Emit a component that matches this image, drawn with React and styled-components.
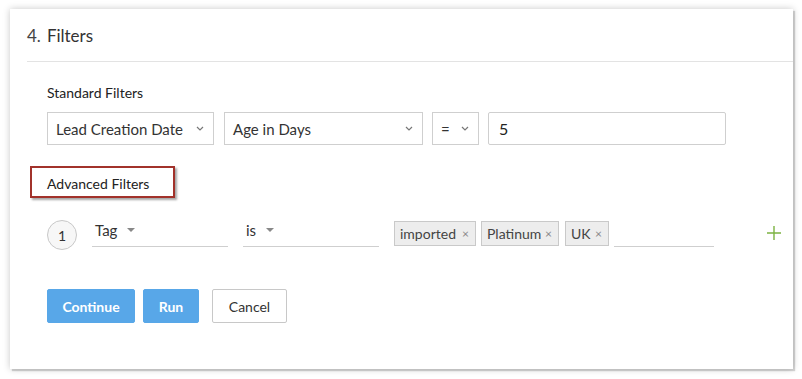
import React from "react";
import styled, { createGlobalStyle } from "styled-components";

const GlobalStyle = createGlobalStyle`
  html, body {
    margin: 0;
    padding: 0;
    background: #ffffff;
  }
  body {
    font-family: Lato, "Liberation Sans", Arial, sans-serif;
    color: #333;
  }
`;

const Page = styled.div`
  width: 802px;
  height: 379px;
  padding: 9px 0 0 10px;
  box-sizing: border-box;
`;

const Panel = styled.div`
  width: 783px;
  height: 360px;
  background: #fff;
  box-sizing: border-box;
  box-shadow: 2px 2px 1px rgba(0, 0, 0, 0.16), 0 0 7px rgba(0, 0, 0, 0.22);
  display: flex;
  flex-direction: column;
`;

const Header = styled.div`
  margin-left: 17px;
  height: 53px;
  border-bottom: 1px solid #e3e3e3;
  box-sizing: border-box;
  display: flex;
  align-items: center;
  padding-top: 1px;
`;

const Title = styled.h2`
  margin: 0;
  font-size: 17px;
  font-weight: 400;
  color: #333;
  span {
    margin-right: 6px;
    color: #444;
  }
`;

const Body = styled.div`
  padding: 0 0 0 37px;
  display: flex;
  flex-direction: column;
  align-items: flex-start;
`;

const SectionLabel = styled.div`
  margin-top: 23px;
  font-size: 14px;
  line-height: 16px;
  color: #222;
`;

const SelectRow = styled.div`
  margin-top: 11px;
  display: flex;
  align-items: center;
`;

const Select = styled.div`
  width: ${(p) => p.$w}px;
  height: 33px;
  margin-left: ${(p) => p.$ml || 0}px;
  border: 1px solid #cfcfcf;
  box-sizing: border-box;
  display: flex;
  align-items: center;
  justify-content: space-between;
  padding: 0 9px 0 8px;
  font-size: 15px;
  color: #333;
`;

const Chevron = () => (
  <svg width="8" height="5" viewBox="0 0 8 5">
    <path d="M1 1 L4 4 L7 1" fill="none" stroke="#777" strokeWidth="1.2" />
  </svg>
);

const ValueInput = styled.div`
  width: 238px;
  height: 33px;
  margin-left: 9px;
  border: 1px solid #cfcfcf;
  border-radius: 2px;
  box-sizing: border-box;
  display: flex;
  align-items: center;
  padding-left: 10px;
  font-size: 16px;
  color: #222;
`;

const AdvancedBox = styled.div`
  margin-top: 21px;
  margin-left: -17px;
  width: 145px;
  height: 32px;
  border: 2px solid #a2322b;
  box-sizing: border-box;
  box-shadow: 2px 2px 2px rgba(0, 0, 0, 0.35);
  display: flex;
  align-items: center;
  padding-left: 15px;
  padding-top: 3px;
  font-size: 14px;
  color: #222;
`;

const FilterRow = styled.div`
  margin-top: 22px;
  height: 30px;
  display: flex;
  align-items: center;
`;

const Step = styled.div`
  width: 30px;
  height: 30px;
  border: 1px solid #c8c8c8;
  border-radius: 50%;
  box-sizing: border-box;
  background: #f7f7f7;
  display: flex;
  align-items: center;
  justify-content: center;
  font-size: 14px;
  color: #333;
`;

const Dropdown = styled.div`
  width: 136px;
  height: 27px;
  margin-left: 15px;
  margin-top: -4px;
  border-bottom: 1px solid #cfcfcf;
  box-sizing: border-box;
  display: flex;
  align-items: flex-start;
  padding-left: 3px;
  padding-top: 1px;
  font-size: 15px;
  color: #333;
  gap: 10px;
`;

const Caret = styled.span`
  width: 0;
  height: 0;
  margin-top: 7px;
  border-left: 4px solid transparent;
  border-right: 4px solid transparent;
  border-top: 4px solid #888;
`;

const Chips = styled.div`
  margin-left: 15px;
  display: flex;
  align-items: center;
  height: 27px;
  margin-top: -4px;
`;

const Chip = styled.div`
  width: ${(p) => p.$w}px;
  height: 25px;
  margin-right: ${(p) => p.$mr}px;
  padding: 0 6px 0 5px;
  background: #ededed;
  border: 1px solid #c9c9c9;
  box-sizing: border-box;
  display: flex;
  align-items: center;
  justify-content: space-between;
  font-size: 14px;
  color: #444;
  white-space: nowrap;
`;

const ChipClose = styled.span`
  font-size: 12px;
  color: #888;
`;

const ChipInput = styled.div`
  width: 100px;
  height: 25px;
  border-bottom: 1px solid #cfcfcf;
  box-sizing: border-box;
  align-self: flex-end;
`;

const AddButton = styled.div`
  margin-left: 53px;
  margin-top: -4px;
  display: flex;
  align-items: center;
`;

const PlusIcon = () => (
  <svg width="14" height="14" viewBox="0 0 14 14">
    <path d="M7 0 V14 M0 7 H14" stroke="#7cb342" strokeWidth="1.4" />
  </svg>
);

const ButtonRow = styled.div`
  margin-top: 39px;
  display: flex;
  align-items: center;
`;

const Button = styled.button`
  width: ${(p) => p.$w}px;
  height: 34px;
  margin-left: ${(p) => p.$ml || 0}px;
  border-radius: 2px;
  font-family: inherit;
  font-size: 14px;
  padding: 0;
  cursor: pointer;
  background: ${(p) => (p.$primary ? "#58a7e8" : "#fff")};
  color: ${(p) => (p.$primary ? "#fff" : "#333")};
  border: 1px solid ${(p) => (p.$primary ? "#58a7e8" : "#c8c8c8")};
  font-weight: ${(p) => (p.$primary ? 700 : 400)};
`;

export default function App() {
  return (
    <>
      <GlobalStyle />
      <Page>
        <Panel>
          <Header>
            <Title>
              <span>4.</span>Filters
            </Title>
          </Header>
          <Body>
            <SectionLabel>Standard Filters</SectionLabel>
            <SelectRow>
              <Select $w={167}>
                Lead Creation Date <Chevron />
              </Select>
              <Select $w={199} $ml={10}>
                Age in Days <Chevron />
              </Select>
              <Select $w={47} $ml={9}>
                = <Chevron />
              </Select>
              <ValueInput>5</ValueInput>
            </SelectRow>
            <AdvancedBox>Advanced Filters</AdvancedBox>
            <FilterRow>
              <Step>1</Step>
              <Dropdown>
                Tag <Caret />
              </Dropdown>
              <Dropdown>
                is <Caret />
              </Dropdown>
              <Chips>
                <Chip $w={82} $mr={5}>
                  imported <ChipClose>×</ChipClose>
                </Chip>
                <Chip $w={78} $mr={6}>
                  Platinum <ChipClose>×</ChipClose>
                </Chip>
                <Chip $w={44} $mr={5}>
                  UK <ChipClose>×</ChipClose>
                </Chip>
                <ChipInput />
              </Chips>
              <AddButton>
                <PlusIcon />
              </AddButton>
            </FilterRow>
            <ButtonRow>
              <Button $primary $w={88}>Continue</Button>
              <Button $primary $w={56} $ml={8}>Run</Button>
              <Button $w={75} $ml={13}>Cancel</Button>
            </ButtonRow>
          </Body>
        </Panel>
      </Page>
    </>
  );
}
